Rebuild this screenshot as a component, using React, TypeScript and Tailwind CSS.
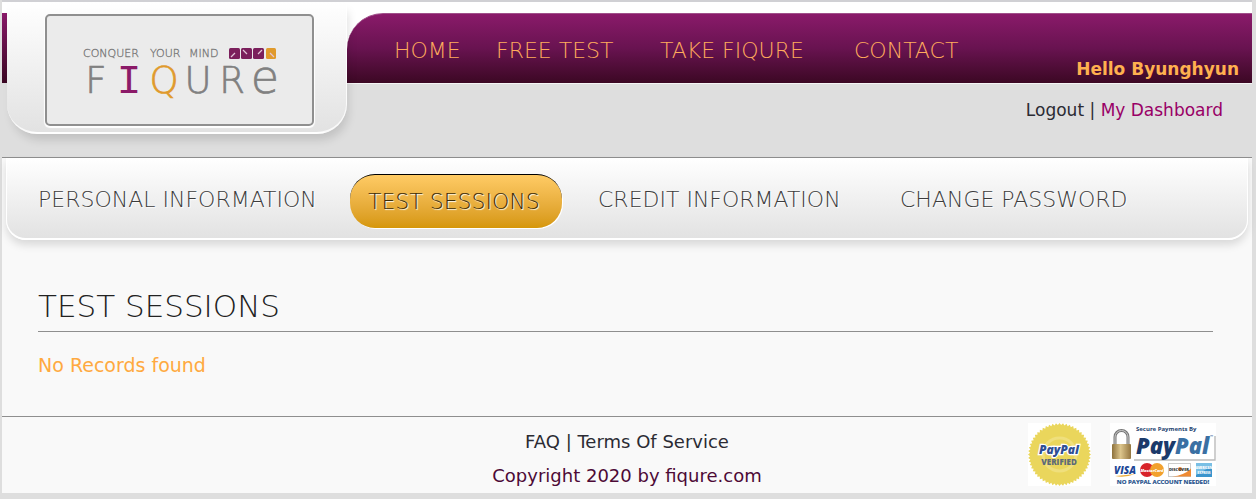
import clsx from "clsx";

const MAIN_LINKS = [
  { label: "HOME", width: "w-[102px]" },
  { label: "FREE TEST", width: "w-[164px]" },
  { label: "TAKE FIQURE", width: "w-[194px]" },
  { label: "CONTACT", width: "w-[104px]" },
];

const TABS = [
  { label: "PERSONAL INFORMATION", width: "w-[312px]", active: false },
  { label: "TEST SESSIONS", width: "w-[212px]", active: true },
  { label: "CREDIT INFORMATION", width: "w-[284px]", active: false },
  { label: "CHANGE PASSWORD", width: "w-[264px]", active: false },
];

const DISPLAY_FONT = "font-['DejaVu_Sans',sans-serif] font-extralight";

function Logo() {
  return (
    <svg
      viewBox="0 -5 200 60"
      className="h-[60px] w-[200px] overflow-visible"
      role="img"
      aria-label="FIQURE"
    >
      <g fontFamily="DejaVu Sans, sans-serif" fontWeight="200">
        <g fontSize="11" fill="#777" stroke="#777" strokeWidth="0.3">
          <text x="3" y="12">CONQUER</text>
          <text x="70" y="12">YOUR</text>
          <text x="109" y="12">MIND</text>
        </g>
        <g fontSize="37" strokeWidth="0.7" textAnchor="middle" fill="#808080" stroke="#808080">
          <text x="16" y="48">F</text>
          <text x="49" y="48" fontSize="41" fontFamily="Liberation Mono, monospace" fill="#8b1a68" stroke="none">I</text>
          <text x="84" y="48" fill="#e09a2c" stroke="#e09a2c">Q</text>
          <text x="118" y="48">U</text>
          <text x="152" y="48">R</text>
          <text x="185" y="48" fontSize="46">e</text>
        </g>
      </g>
      <g fill="#7b1f5c">
        <rect x="149" y="3" width="11" height="11" rx="1.5" />
        <rect x="161" y="3" width="11" height="11" rx="1.5" />
        <rect x="173" y="3" width="11" height="11" rx="1.5" />
        <rect x="186" y="3" width="10" height="11" rx="1.5" fill="#e09a2c" />
      </g>
      <path
        d="M151 12l4-4M163 5l4 4M182 5l-4 4M190 8l4 4"
        stroke="#e3c5d8"
        strokeWidth="1.2"
        fill="none"
      />
    </svg>
  );
}

function sealPoints() {
  return Array.from({ length: 112 }, (_, i) => {
    const r = i % 2 ? 29.5 : 31.5;
    const a = (i / 112) * Math.PI * 2;
    return `${(31.5 + r * Math.cos(a)).toFixed(2)},${(31.5 + r * Math.sin(a)).toFixed(2)}`;
  }).join(" ");
}

function VerifiedSeal() {
  return (
    <svg viewBox="0 0 63 63" className="w-[63px] h-[63px] bg-white" role="img" aria-label="PayPal Verified">
      <polygon points={sealPoints()} fill="#ead65c" />
      <circle cx="31.5" cy="31.5" r="18" fill="#efdf7c" />
      <circle cx="31.5" cy="31.5" r="15" fill="#ead65c" />
      <g fontFamily="Open Sans, sans-serif" textAnchor="middle">
        <text
          x="31"
          y="31"
          fontSize="12"
          fontWeight="800"
          fontStyle="italic"
          fill="#2f4f93"
          stroke="#fff"
          strokeWidth="2.4"
          paintOrder="stroke"
        >
          PayPal
        </text>
        <text x="31" y="42" fontSize="8" fontWeight="800" fill="#5d6a78">
          VERIFIED
        </text>
      </g>
    </svg>
  );
}

function SecurePayments() {
  return (
    <svg
      viewBox="0 0 106 63"
      className="w-[106px] h-[63px] overflow-visible bg-white"
      role="img"
      aria-label="Secure payments by PayPal"
    >
      <defs>
        <linearGradient id="brass" x1="0" x2="1">
          <stop offset="0" stopColor="#8d713c" />
          <stop offset="0.45" stopColor="#dcc58c" />
          <stop offset="1" stopColor="#947640" />
        </linearGradient>
      </defs>
      <path d="M24 37H105V13" fill="none" stroke="#bbb" strokeWidth="1.4" />
      <path d="M5 22V14a6.500 6.500 0 0 1 13 0v8" fill="none" stroke="#777" strokeWidth="3" />
      <path d="M5 22V14a6.500 6.500 0 0 1 13 0v8" fill="none" stroke="#ccc" strokeWidth="1" />
      <rect x="2" y="21" width="19" height="15" rx="1" fill="url(#brass)" />
      <g fontFamily="Open Sans, sans-serif" fontWeight="700">
        <text x="26" y="8" fontSize="6" fill="#24426f">Secure Payments By</text>
        <text x="26" y="31" fontSize="22" fontWeight="800" fontStyle="italic" fill="#1b3a6b">
          Pay<tspan fill="#3a70a3">Pal</tspan>
        </text>
        <text x="100" y="15" fontSize="4" fill="#3a70a3">™</text>
        <text x="4" y="51" fontSize="10" fontStyle="italic" fontWeight="800" fill="#1d4796">VISA</text>
        <text x="53" y="61" fontSize="6" textAnchor="middle" fill="#24508b" stroke="#24508b" strokeWidth="0.2">
          NO PAYPAL ACCOUNT NEEDED!
        </text>
      </g>
      <path d="M5 53q10 2 20-2-8 1-20 2z" fill="#edab35" />
      <circle cx="37" cy="47" r="7" fill="#d8232a" />
      <circle cx="47" cy="47" r="7" fill="#f2a12d" />
      <rect x="58.500" y="40.500" width="22" height="13" fill="#fff" stroke="#ccc" />
      <path d="M62 53.500q12-1 19-8v8z" fill="#ef8a32" />
      <circle cx="70" cy="46" r="2" fill="#ef8a32" />
      <rect x="86" y="40" width="16" height="14" fill="#3b95cd" />
      <path d="M86 40h16v3l-16 9z" fill="#79bfe5" />
      <g fontFamily="Open Sans, sans-serif" fontWeight="800" textAnchor="middle">
        <text x="42" y="49" fontSize="4" fontStyle="italic" fill="#fff">MasterCard</text>
        <text x="69" y="48" fontSize="4" fill="#333">DISCOVER</text>
        <text x="94" y="46" fontSize="3" fill="#fff">AMERICAN</text>
        <text x="94" y="51" fontSize="3" fill="#fff">EXPRESS</text>
      </g>
    </svg>
  );
}

function Header() {
  return (
    <header className="flex h-[155px] bg-[#dedede]">
      <div className="w-[5px] shrink-0">
        <div className="h-[11px] bg-white" />
        <div className="h-[70px] bg-linear-to-b from-[#8a1a6a] to-[#3c0824]" />
      </div>

      <a
        href="#"
        className="relative z-10 flex h-[132px] w-[340px] shrink-0 justify-center rounded-b-[30px] border-b-2 border-r border-white/80 bg-linear-to-b from-white to-[#e2e2e2] pl-[6px] pt-3 shadow-[3px_8px_10px_-2px_rgba(0,0,0,0.13)]"
      >
        <span className="flex h-[112px] w-[269px] items-center justify-center rounded-[5px] border-2 border-[#8f8f8f] bg-[#ebebeb] shadow-[0_1px_1px_1px_#fff]">
          <Logo />
        </span>
      </a>

      <div className="min-w-0 flex-1">
        <div className="bg-white pt-[11px]">
          <div className="flex h-[70px] justify-between rounded-tl-[36px] border-t border-[#a0508a] bg-linear-to-b from-[#8a1a6a] via-[#681350] to-[#3c0824] pl-[47px]">
            <nav className={clsx(DISPLAY_FONT, "flex pt-[25px] text-[22px] leading-6 text-[#ffab5c]")}>
              {MAIN_LINKS.map((link) => (
                <a key={link.label} href="#" className={clsx("whitespace-nowrap", link.width)}>
                  {link.label}
                </a>
              ))}
            </nav>
            <p className="self-end whitespace-nowrap pb-0.5 pr-[13px] text-[17px] font-bold leading-6 text-[#ffb04f]">
              Hello Byunghyun
            </p>
          </div>
        </div>
        <div className="border-t border-white/70 pr-[29px] pt-[14px] text-right text-[17px] leading-6 text-[#2b2b33]">
          <a href="#">Logout</a> |{" "}
          <a href="#" className="text-[#990066]">
            My Dashboard
          </a>
        </div>
      </div>
    </header>
  );
}

function TabBar() {
  return (
    <div className="border-t border-[#8f8f8f] px-1">
      <nav
        className={clsx(
          DISPLAY_FONT,
          "flex h-[82px] items-start gap-[18px] rounded-b-[20px] border-x border-b-2 border-white bg-linear-to-b from-white to-[#e2e2e2] pl-[13px] pt-4 text-[22px] shadow-[0_5px_9px_rgba(0,0,0,0.13)]"
        )}
      >
        {TABS.map((tab) => (
          <a
            key={tab.label}
            href="#"
            className={clsx(
              "flex h-[54px] items-center whitespace-nowrap px-[18px] [text-shadow:1px_1px_1px_#fff]",
              tab.width,
              tab.active
                ? "rounded-[25px] border-t border-black bg-linear-to-b from-[#ffcb64] to-[#d69706] text-[#3d2d08] shadow-[1px_1px_0_#fff] [text-shadow:1px_1px_1px_#ffe36b]"
                : "pb-1 text-[#3c3c3c]"
            )}
          >
            {tab.label}
          </a>
        ))}
      </nav>
    </div>
  );
}

export default function App() {
  return (
    <div className="bg-[#dedede] pb-[7px] pl-0.5 pr-1 font-['DejaVu_Sans',Verdana,sans-serif]">
      <div className="border-t-2 border-[#d0d0d4] bg-[#f9f9f9]">
        <Header />
        <TabBar />

        <main className="pb-[39px] pl-9 pr-[39px] pt-12">
          <h1
            className={clsx(
              DISPLAY_FONT,
              "border-b border-[#8f8f8f] pb-[7px] text-[31px] leading-9 text-[#222]"
            )}
          >
            TEST SESSIONS
          </h1>
          <p className="pt-[21px] text-[19px] leading-6 text-[#ffa940]">No Records found</p>
        </main>

        <footer className="grid grid-cols-[1fr_auto_1fr] border-t border-[#8f8f8f] text-[18px] text-[#2b2b33]">
          <div />
          <div className="pt-2 text-center leading-[34px]">
            <p>
              <a href="#">FAQ</a> | <a href="#">Terms Of Service</a>
            </p>
            <p className="text-[#4d0a36]">Copyright 2020 by fiqure.com</p>
          </div>
          <div className="flex justify-end gap-[19px] pr-9 pt-1.5">
            <VerifiedSeal />
            <SecurePayments />
          </div>
        </footer>
      </div>
    </div>
  );
}
